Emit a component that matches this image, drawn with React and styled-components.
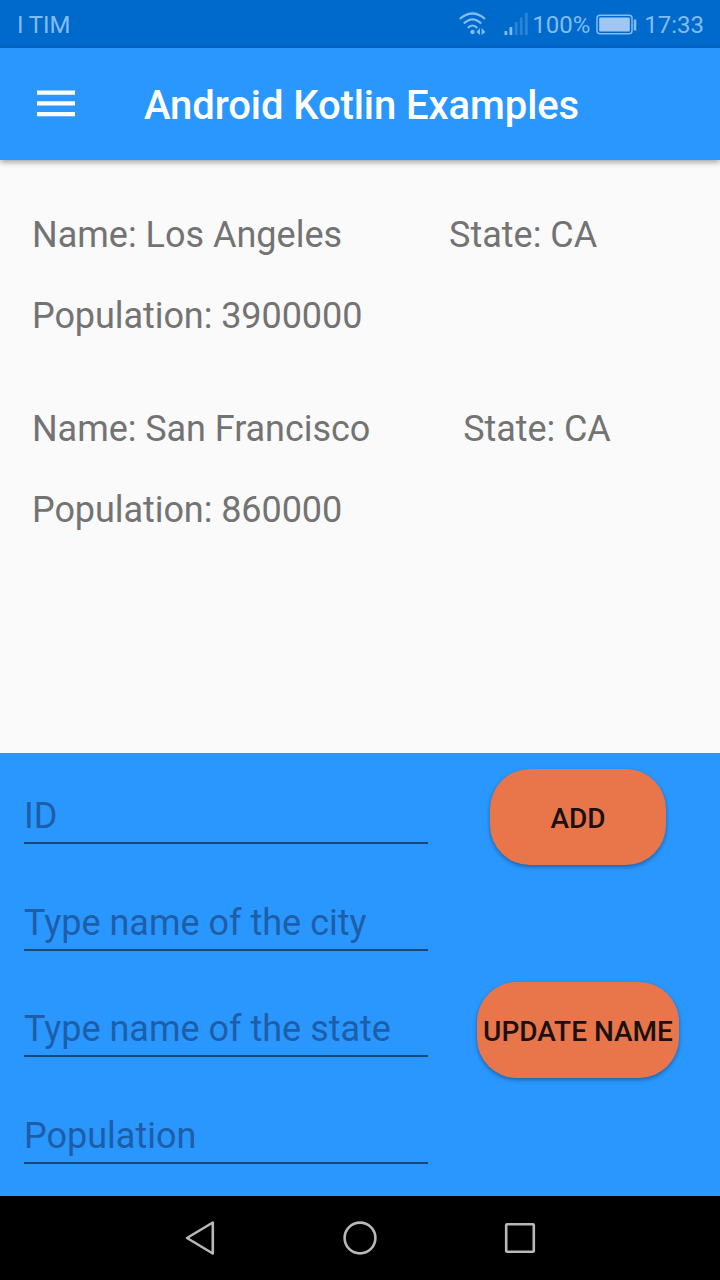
import React from "react";
import styled, { createGlobalStyle } from "styled-components";

const Global = createGlobalStyle`
  *{box-sizing:border-box}
  body{margin:0;font-family:Roboto,sans-serif;background:#fafafa}
`;
const Screen = styled.div`width:720px;height:1280px;display:flex;flex-direction:column;background:#fafafa;overflow:hidden;`;
const StatusBar = styled.header`height:48px;flex:none;background:#0069cc;color:#80bdf0;display:flex;align-items:center;padding:2px 16px 0;font-size:24px;line-height:28px;`;
const Carrier = styled.span`flex:1;padding-left:1px;letter-spacing:-.1px;`;
const StatusIcons = styled.svg`width:73px;height:28px;flex:none;`;
const BatteryIcon = styled.svg`width:42px;height:24px;margin:0 6px;flex:none;`;
const AppBar = styled.div`height:112px;flex:none;background:#2a97ff;display:flex;align-items:center;padding-left:36px;box-shadow:0 2px 6px rgba(0,0,0,.38);z-index:1;`;
const MenuIcon = styled.svg`width:40px;height:30px;`;
const Title = styled.h1`margin:4px 0 0 68px;color:#fff;font-size:40px;font-weight:500;line-height:48px;letter-spacing:-.09px;white-space:nowrap;`;
const Content = styled.main`flex:1;padding:54px 32px 0;color:#737373;font-size:36px;line-height:42px;`;
const City = styled.section`height:193.5px;`;
const CityLine = styled.div`display:flex;gap:${p => p.$gap || 0}px;margin-bottom:39px;letter-spacing:${p => p.$tracking || 0}px;white-space:pre;`;
const Form = styled.form`height:443px;flex:none;background:#2a97ff;display:grid;grid-template-columns:404px 1fr;padding:0 15px 0 24px;grid-template-rows:repeat(4,106.7px);`;
const Field = styled.label`height:91px;padding-top:42px;border-bottom:2px solid #174779;color:#1e5ea8;font-size:36px;line-height:42px;white-space:nowrap;`;
const ButtonCell = styled.div`padding:16px 0 0 23px;display:flex;justify-content:center;align-items:flex-start;`;
const Button = styled.button`border:0;padding:3px 0 0;width:${p => p.$width}px;height:96px;border-radius:40px;background:#e9764b;color:#1b1110;font:500 28px/34px Roboto,sans-serif;white-space:nowrap;box-shadow:0 2px 4px rgba(0,0,0,.35);`;
const Navigation = styled.nav`height:84px;flex:none;background:#000;display:flex;justify-content:center;align-items:center;gap:120px;`;
const NavIcon = styled.svg`width:40px;height:40px;fill:none;stroke:#b8b8b8;stroke-width:2.6;stroke-linejoin:round;`;

const cities = [
  { name: "Los Angeles", population: "3900000", gap: 107 },
  { name: "San Francisco", population: "860000", gap: 93, tracking: -0.06 },
];
const fields = [
  { hint: "ID", action: "ADD", width: 176 },
  { hint: "Type name of the city" },
  { hint: "Type name of the state", action: "UPDATE NAME", width: 202 },
  { hint: "Population" },
];

export default function App() {
  return <><Global /><Screen>
    <StatusBar>
      <Carrier>I TIM</Carrier>
      <StatusIcons viewBox="0 0 73 28">
        <g fill="none" stroke="#80bdf0" strokeWidth="2.2">
          <path d="M.8 7.8Q13.5-2.8 26 7.8" />
          <path d="M4.8 12.5Q13.5 4.2 22.2 12.5" />
          <path d="M8.8 17Q13.5 12 18.2 17" />
        </g>
        <g fill="#80bdf0">
          <circle cx="13.5" cy="21" r="2.2" />
          <path d="M21 17v7l-3.6-3zM22.6 17v7l3.8-3z" />
          <path d="M45.5 20h2.8v4h-2.8zM50.5 16h2.8v8h-2.8z" />
        </g>
        <path fill="#2a85d9" d="M55.7 11h2.8v13h-2.8zM60.8 6.5h2.8V24h-2.8zM65.9 2h2.8v22h-2.8z" />
      </StatusIcons>
      <span>100%</span>
      <BatteryIcon viewBox="0 0 42 24">
        <rect x="1" y="2.2" width="35" height="18.6" rx="3" fill="none" stroke="#80bdf0" strokeWidth="1.5" />
        <rect x="3.2" y="4.5" width="30.6" height="14" rx="1" fill="#a0c7f2" />
        <path d="M39 6.5v11" stroke="#80bdf0" strokeWidth="2.6" />
      </BatteryIcon>
      <span>17:33</span>
    </StatusBar>
    <AppBar>
      <MenuIcon viewBox="0 0 40 30"><path d="M1 3.6h38M1 14.4h38M1 25.2h38" stroke="#fff" strokeWidth="4.2" /></MenuIcon>
      <Title>Android Kotlin Examples</Title>
    </AppBar>
    <Content>
      {cities.map(c => (
        <City key={c.name}>
          <CityLine $gap={c.gap} $tracking={c.tracking}><span>Name: {c.name}</span><span>State: CA</span></CityLine>
          <CityLine $tracking={-0.07}>Population: {c.population}</CityLine>
        </City>
      ))}
    </Content>
    <Form onSubmit={e => e.preventDefault()}>
      {fields.map(f => (
        <React.Fragment key={f.hint}>
          <Field>{f.hint}</Field>
          <ButtonCell>{f.action && <Button $width={f.width}>{f.action}</Button>}</ButtonCell>
        </React.Fragment>
      ))}
    </Form>
    <Navigation>
      <NavIcon viewBox="0 0 40 40"><path d="M32.8 4.5v31L7 20z" /></NavIcon>
      <NavIcon viewBox="0 0 40 40"><circle cx="20" cy="20" r="15.4" /></NavIcon>
      <NavIcon viewBox="0 0 40 40"><rect x="6.2" y="6.2" width="27.6" height="27.6" rx=".8" /></NavIcon>
    </Navigation>
  </Screen></>;
}
